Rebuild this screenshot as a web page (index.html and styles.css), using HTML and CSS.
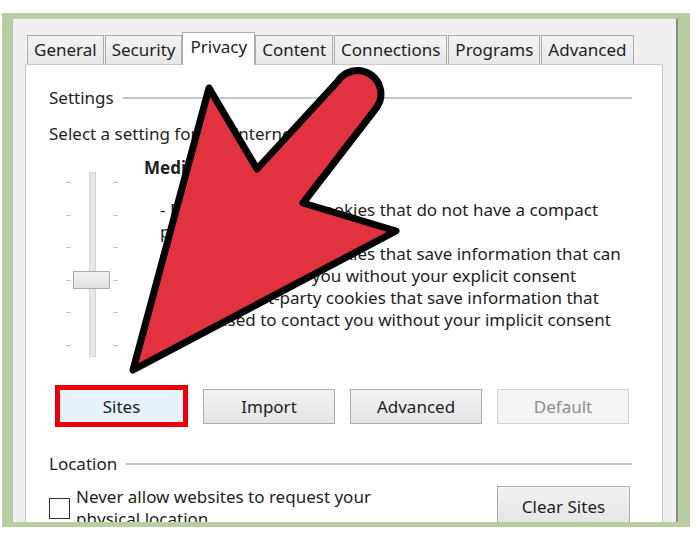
FILE: index.html
```html
<!DOCTYPE html>
<html>
<head>
    <title>Internet Options - Privacy</title>
    <link rel="stylesheet" href="styles.css">
</head>
<body>
    <div class="frame">
        <div class="dialog">
            <div class="tabs">
                <div class="tab">General</div>
                <div class="tab">Security</div>
                <div class="tab active">Privacy</div>
                <div class="tab">Content</div>
                <div class="tab">Connections</div>
                <div class="tab">Programs</div>
                <div class="tab">Advanced</div>
            </div>

            <div class="panel">
                <div class="group-title"><span>Settings</span></div>
                <p class="hint">Select a setting for the Internet zone.</p>

                <div class="settings">
                    <div class="slider">
                        <div class="ticks">
                            <span></span><span></span><span></span>
                            <span></span><span></span><span></span>
                        </div>
                        <div class="track"></div>
                        <div class="ticks">
                            <span></span><span></span><span></span>
                            <span></span><span></span><span></span>
                        </div>
                        <div class="thumb"></div>
                    </div>

                    <div class="level">
                        <div class="level-name">Medium</div>
                        <div class="level-desc">
                            <div>- Blocks third-party cookies that do not have a compact</div>
                            <div>privacy policy</div>
                            <div>- Blocks third-party cookies that save information that can</div>
                            <div>be used to contact you without your explicit consent</div>
                            <div>- Restricts first-party cookies that save information that</div>
                            <div>can be used to contact you without your implicit consent</div>
                        </div>
                    </div>
                </div>

                <div class="buttons">
                    <button class="btn highlight">Sites</button>
                    <button class="btn">Import</button>
                    <button class="btn">Advanced</button>
                    <button class="btn" disabled>Default</button>
                </div>

                <div class="group-title location-title"><span>Location</span></div>

                <div class="location">
                    <label class="check">
                        <span class="box"></span>
                        <span>Never allow websites to request your<br>physical location</span>
                    </label>
                    <button class="btn clear">Clear Sites</button>
                </div>
            </div>
        </div>
    </div>

    <!-- the big pointer drawn over the dialog -->
    <svg class="arrow" width="700" height="538" viewBox="0 0 700 538">
        <path d="M133,370 L209,88 L257,169 L338,81 A23,23 0 0 1 377,107 L303,203 L396,231 Z"
              fill="#e2313f" stroke="#000" stroke-width="7" stroke-linejoin="round"/>
    </svg>
</body>
</html>
```

FILE: styles.css
```css
body {
    margin: 0;
    padding: 13px 10px 0 2px;
    background: #fff;
    font-family: "Noto Sans", sans-serif;
    font-size: 17px;
    color: #1e1e1e;
}

.frame {
    width: 666px;
    padding: 5px 12px 5px 10px;
    background: #b7cea0;
}

.dialog {
    height: 504px;
    box-sizing: border-box;
    padding: 13px 13px 0 12px;
    background: #f0f0f0;
    border-left: 1px solid #b9b9b9;
    border-top: 1px solid #c8c8c8;
    border-right: 2px solid #8a8a8a;
    overflow: hidden;
}

/* tabs */
.tabs {
    display: flex;
    align-items: flex-end;
    height: 32px;
    padding-left: 2px;
}
.tab {
    height: 29px;
    box-sizing: border-box;
    padding: 0 6px;
    line-height: 27px;
    border: 1px solid #acacac;
    border-bottom: none;
    margin-right: 1px;
    background: linear-gradient(#f2f2f2, #e8e8e8);
}
.tab.active {
    position: relative;
    z-index: 1;
    height: 33px;
    margin: 0 0 -1px -1px;
    padding: 0 7px;
    line-height: 28px;
    background: #fff;
}

/* panel */
.panel {
    height: 460px;
    box-sizing: border-box;
    padding: 22px 30px 0 23px;
    background: #fff;
    border: 1px solid #c9c9c9;
}

.group-title {
    display: flex;
    align-items: center;
    gap: 9px;
    line-height: 22px;
}
.group-title::after {
    content: "";
    flex: 1;
    height: 2px;
    background: #c6c6c6;
}

.hint {
    margin: 14px 0 0;
    line-height: 22px;
}

/* slider + description */
.settings {
    display: flex;
    margin-top: 12px;
}
.slider {
    position: relative;
    display: flex;
    justify-content: space-between;
    width: 52px;
    height: 185px;
    margin: 15px 0 0 17px;
}
.ticks {
    display: flex;
    flex-direction: column;
    justify-content: space-between;
    padding: 10px 0 11px;
}
.ticks span {
    display: block;
    width: 5px;
    height: 1px;
    background: #c4c4c4;
}
.track {
    width: 7px;
    box-sizing: border-box;
    background: #e8e8e8;
    border: 1px solid #d4d4d4;
}
.thumb {
    position: absolute;
    left: 7px;
    top: 99px;
    width: 37px;
    height: 18px;
    box-sizing: border-box;
    background: linear-gradient(#f2f2f2, #e2e2e2);
    border: 1px solid #acacac;
}

.level {
    margin-left: 26px;
    line-height: 22px;
    white-space: nowrap;
}
.level-name {
    font-weight: bold;
}
.level-desc {
    margin-top: 20px;
    padding-left: 16px;
}

/* buttons */
.buttons {
    display: flex;
    align-items: center;
    gap: 15px;
    height: 42px;
    margin: 28px 0 0 6px;
}
.btn {
    width: 132px;
    height: 35px;
    font-family: "Noto Sans", sans-serif;
    font-size: 17px;
    color: #1e1e1e;
    background: linear-gradient(#f3f3f3, #e4e4e4);
    border: 1px solid #adadad;
    padding: 0;
}
.btn.highlight {
    height: 42px;
    width: 133px;
    background: #e5f1fb;
    border: 5px solid #e8000b;
}
.btn:disabled {
    color: #8d8d8d;
    background: #f4f4f4;
    border-color: #d3d3d3;
}

/* location */
.location-title {
    margin-top: 26px;
}
.location {
    display: flex;
    justify-content: space-between;
    align-items: flex-start;
    margin-top: 11px;
}
.check {
    display: flex;
    align-items: center;
    gap: 6px;
    line-height: 22px;
}
.box {
    width: 21px;
    height: 21px;
    box-sizing: border-box;
    border: 1px solid #333;
    background: #fff;
}
.btn.clear {
    width: 133px;
    height: 40px;
    margin: 0 2px 0 0;
}

.arrow {
    position: absolute;
    top: 0;
    left: 0;
    pointer-events: none;
}
```
